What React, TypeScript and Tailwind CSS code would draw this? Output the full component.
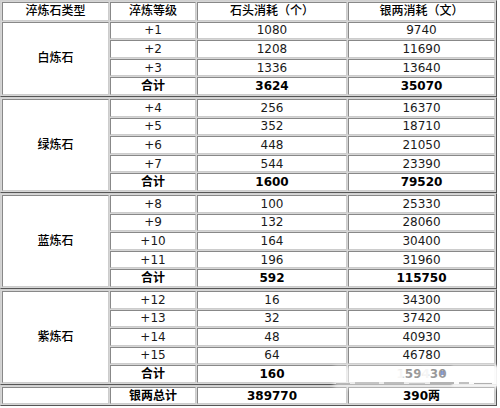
import React from "react";

type Row = [string, string, string];
type Group = { name: string; rows: Row[]; total: [string, string] };

const groups: Group[] = [
  {
    name: "白炼石",
    rows: [
      ["+1", "1080", "9740"],
      ["+2", "1208", "11690"],
      ["+3", "1336", "13640"],
    ],
    total: ["3624", "35070"],
  },
  {
    name: "绿炼石",
    rows: [
      ["+4", "256", "16370"],
      ["+5", "352", "18710"],
      ["+6", "448", "21050"],
      ["+7", "544", "23390"],
    ],
    total: ["1600", "79520"],
  },
  {
    name: "蓝炼石",
    rows: [
      ["+8", "100", "25330"],
      ["+9", "132", "28060"],
      ["+10", "164", "30400"],
      ["+11", "196", "31960"],
    ],
    total: ["592", "115750"],
  },
  {
    name: "紫炼石",
    rows: [
      ["+12", "16", "34300"],
      ["+13", "32", "37420"],
      ["+14", "48", "40930"],
      ["+15", "64", "46780"],
    ],
    total: ["160", "159430"],
  },
];

const cellCls =
  "flex items-center justify-center bg-white border border-t-[#888888] border-l-[#888888] border-b-[#cccccc] border-r-[#cccccc] text-[12px] leading-none text-[#1a1a1a]";

const blockCls =
  "grid grid-cols-[107px_86px_150px_147px] gap-px p-px bg-[#d6d6d6] border border-t-[#d0d0d0] border-l-[#d0d0d0] border-b-[#555555] border-r-[#555555]";

function Cell({
  children,
  bold,
  medium,
  className = "",
}: {
  children?: React.ReactNode;
  bold?: boolean;
  medium?: boolean;
  className?: string;
}) {
  return (
    <div className={`${cellCls} ${bold ? "font-bold text-black" : ""} ${medium ? "font-medium text-black" : ""} ${className}`}>
      {children}
    </div>
  );
}

function GroupCells({ g, first }: { g: Group; first: boolean }) {
  return (
    <>
      <Cell medium className={first ? "row-span-4" : "row-span-5"}>
        {g.name}
      </Cell>
      {g.rows.map((r) => (
        <React.Fragment key={r[0]}>
          <Cell>{r[0]}</Cell>
          <Cell>{r[1]}</Cell>
          <Cell>{r[2]}</Cell>
        </React.Fragment>
      ))}
      <Cell bold>合计</Cell>
      <Cell bold>{g.total[0]}</Cell>
      <Cell bold>{g.total[1]}</Cell>
    </>
  );
}

export default function App() {
  return (
    <div
      className="relative w-[500px] h-[408px] overflow-hidden bg-white"
      style={{ fontFamily: "'DejaVu Sans', 'Noto Sans CJK SC', sans-serif" }}
    >
      <div className="flex flex-col w-[497px]">
        <div className={`${blockCls} grid-rows-[18.6px_repeat(4,17.6px)]`}>
          <Cell medium>淬炼石类型</Cell>
          <Cell medium>淬炼等级</Cell>
          <Cell medium>石头消耗（个）</Cell>
          <Cell medium>银两消耗（文）</Cell>
          <GroupCells g={groups[0]} first />
        </div>
        {groups.slice(1).map((g) => (
          <div key={g.name} className={`${blockCls} auto-rows-[17.6px]`}>
            <GroupCells g={g} first={false} />
          </div>
        ))}
        <div className={`${blockCls} auto-rows-[17.6px]`}>
          <Cell></Cell>
          <Cell bold>银两总计</Cell>
          <Cell bold>389770</Cell>
          <Cell bold>390两</Cell>
        </div>
      </div>

      {/* watermark overlay */}
      <div className="pointer-events-none absolute left-[334px] top-[366px] w-[170px] h-[22px] bg-white/60 blur-[2px]" />
      <div className="pointer-events-none absolute left-[396px] top-[368px] w-[8px] h-[12px] bg-white/90 blur-[1px]" />
      <div className="pointer-events-none absolute left-[421px] top-[367px] w-[9px] h-[13px] bg-white/90 blur-[1px]" />
      <div className="pointer-events-none absolute left-[452px] top-[366px] w-[48px] h-[20px] bg-white/80 blur-[1px]" />
      <div className="pointer-events-none absolute left-[336px] top-[382px] flex items-center gap-[5px]">
        <span className="block w-[14px] h-[1px] bg-[#b8b8b8]" />
        <span className="block w-[24px] h-[2px] bg-[#c4c4c4]" />
        <span className="block w-[20px] h-[2px] bg-[#bdbdbd]" />
        <span className="block w-[16px] h-[1px] bg-[#c8c8c8]" />
        <span className="block w-[24px] h-[2px] bg-[#b4b4b4]" />
        <span className="block w-[10px] h-[2px] bg-[#c0c0c0]" />
        <span className="block w-[18px] h-[1px] bg-[#b0b0b0]" />
      </div>
      <div className="pointer-events-none absolute left-[441px] top-[371px] w-[3px] h-[4px] bg-[#5a78c0]/70" />
    </div>
  );
}
